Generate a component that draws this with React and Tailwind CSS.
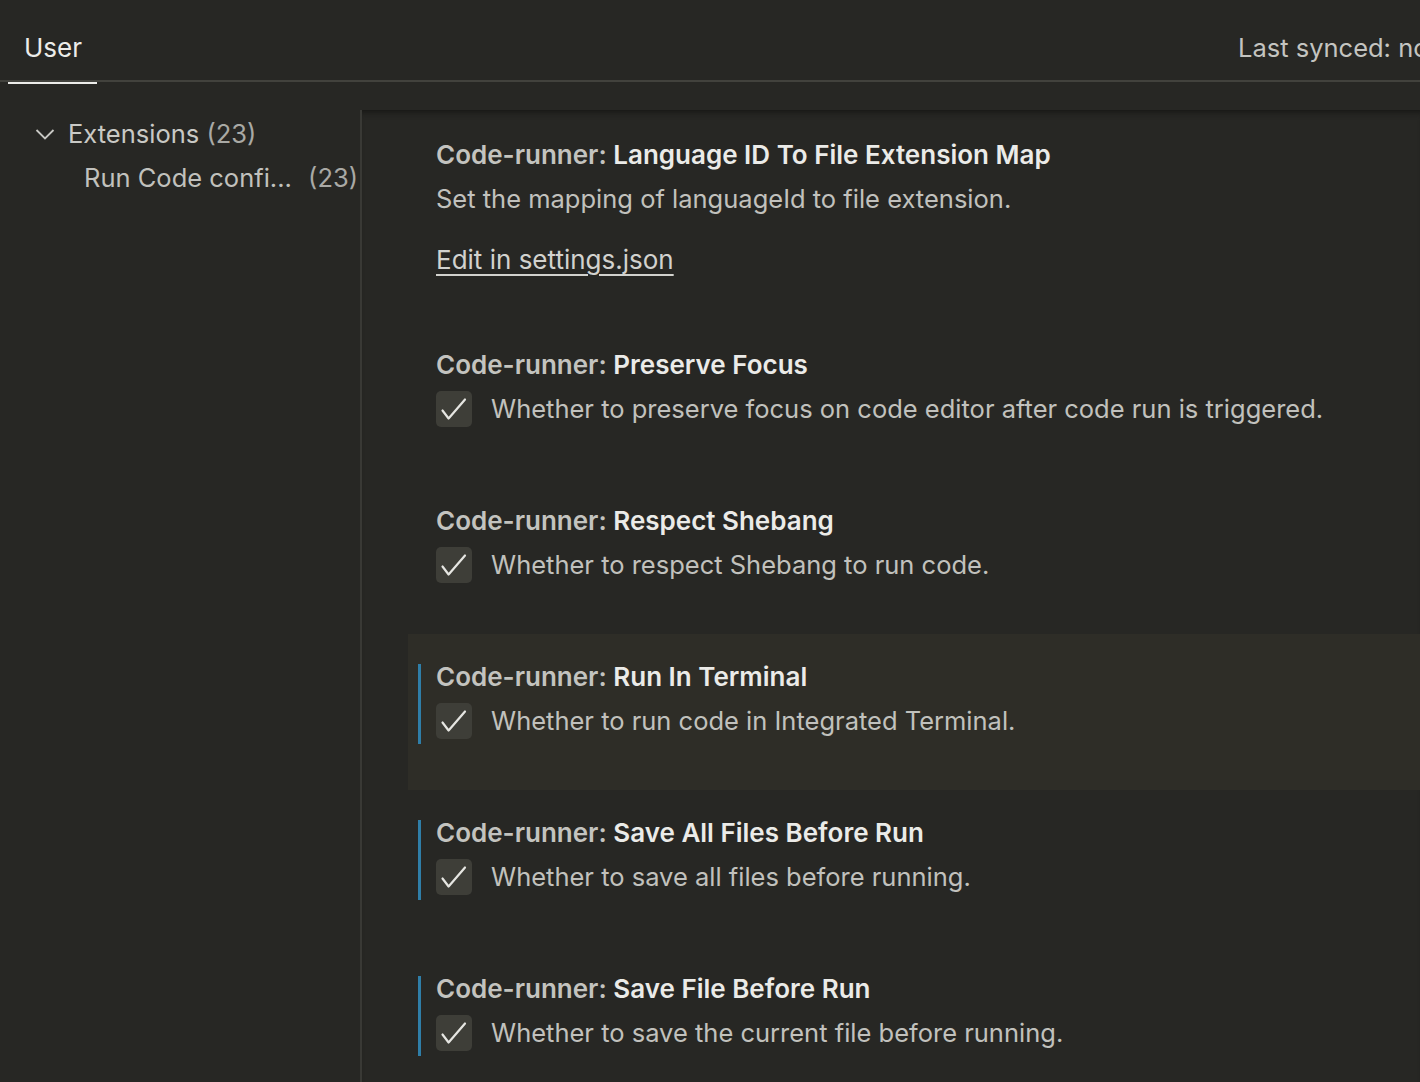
import React from 'react';

const settings = [
  { name: 'Preserve Focus', desc: 'Whether to preserve focus on code editor after code run is triggered.', modified: false },
  { name: 'Respect Shebang', desc: 'Whether to respect Shebang to run code.', modified: false },
  { name: 'Run In Terminal', desc: 'Whether to run code in Integrated Terminal.', modified: true, focused: true },
  { name: 'Save All Files Before Run', desc: 'Whether to save all files before running.', modified: true },
  { name: 'Save File Before Run', desc: 'Whether to save the current file before running.', modified: true },
];

function Check() {
  return (
    <div className="w-[36px] h-[36px] rounded-[5px] bg-[#3e3e38] flex-none">
      <svg width="36" height="36" viewBox="0 0 36 36">
        <path d="M6.5 19.5 L12.6 27.5 L29 8.5" fill="none" stroke="#e6e6e2" strokeWidth="2.2" strokeLinecap="round" strokeLinejoin="round" />
      </svg>
    </div>
  );
}

function Title({ name }) {
  return (
    <div className="h-[36px] leading-[36px] text-[26px] font-semibold whitespace-nowrap">
      <span className="text-[#c3c3bf]">Code-runner: </span>
      <span className="text-[#ebebe8]">{name}</span>
    </div>
  );
}

function SettingItem({ s }) {
  return (
    <div className={`relative h-[156px] pl-[28px] pt-[25px] ${s.focused ? 'bg-[#2e2d27]' : ''}`}>
      {s.modified && <div className="absolute left-[10px] top-[30px] w-[3px] h-[80px] bg-[#2f7ea8]" />}
      <Title name={s.name} />
      <div className="mt-[8px] flex items-center gap-[19px]">
        <Check />
        <span className="text-[25.5px] leading-[36px] text-[#c1c1bd] whitespace-nowrap">{s.desc}</span>
      </div>
    </div>
  );
}

export default function App() {
  return (
    <div className="w-[1420px] h-[1082px] overflow-hidden bg-[#272724] font-['Inter',sans-serif] flex flex-col">
      <div className="h-[82px] flex-none flex border-b-2 border-[#42423d]">
        <div className="ml-[8px] w-[89px] h-[82px] pt-[30px] pl-[16px] relative">
          <div className="text-[26px] leading-[36px] text-[#ecece9]">User</div>
          <div className="absolute left-0 right-0 -bottom-[2px] h-[2px] bg-[#ecece9]" />
        </div>
        <div className="ml-auto w-[182px] overflow-hidden pt-[30px] whitespace-nowrap">
          <div className="text-[25.5px] leading-[36px] text-[#c4c4c0]">Last synced: now</div>
        </div>
      </div>
      <div className="flex flex-1 min-h-0">
        <div className="w-[360px] flex-none pt-[34px]">
          <div className="h-[36px] flex items-center pl-[34px]">
            <svg width="22" height="22" viewBox="0 0 22 22" className="mr-[12px]">
              <path d="M2.5 7 L11 15.5 L19.5 7" fill="none" stroke="#c8c8c4" strokeWidth="1.8" />
            </svg>
            <span className="text-[25.5px] text-[#c9c9c5]">Extensions <span className="text-[#a9a9a5]">(23)</span></span>
          </div>
          <div className="h-[36px] mt-[8px] flex items-center pl-[84px] pr-[2px] justify-between whitespace-nowrap">
            <span className="text-[25.5px] text-[#c1c1bd]">Run Code confi...</span>
            <span className="text-[25.5px] text-[#a9a9a5]">(23)</span>
          </div>
        </div>
        <div className="flex-1 mt-[28px] pt-[2px] border-l-2 border-[#393935] shadow-[inset_0_7px_6px_-5px_#161614] pl-[46px]">
          <div className="relative pl-[28px] pt-[25px] h-[210px]">
            <Title name="Language ID To File Extension Map" />
            <div className="mt-[8px] h-[36px] flex items-center text-[25.5px] text-[#c1c1bd] whitespace-nowrap">
              Set the mapping of languageId to file extension.
            </div>
            <div className="mt-[25px] h-[36px] leading-[36px] text-[26px] text-[#d2d2ce] underline underline-offset-[5px] decoration-[1.5px]">
              Edit in settings.json
            </div>
          </div>
          {settings.map((s) => (
            <SettingItem key={s.name} s={s} />
          ))}
        </div>
      </div>
    </div>
  );
}
